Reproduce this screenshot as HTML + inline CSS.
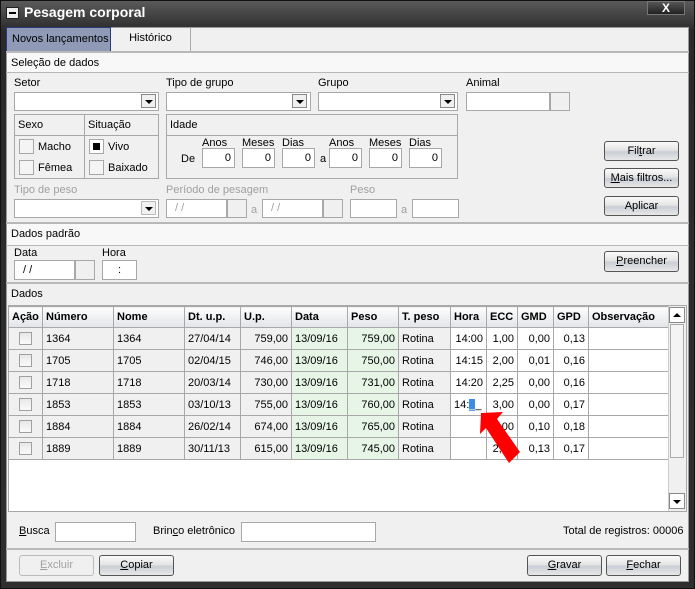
<!DOCTYPE html>
<html><head><meta charset="utf-8"><style>
*{box-sizing:border-box;margin:0;padding:0}
body{width:695px;height:589px;background:#3a3a3a;font-family:"Liberation Sans",Arial,sans-serif;font-size:11px;color:#000;position:relative;overflow:hidden}
.a{position:absolute}
.win{left:0;top:0;width:695px;height:589px;background:linear-gradient(#5a5a5a,#2a2a2a 30px,#2e2e2e);border:1px solid #111}
.title{left:24px;top:4px;color:#fff;font-weight:bold;font-size:14px}
.content{left:6px;top:27px;width:683px;height:555px;background:#f0f0f0;border:1px solid #999}
.in{background:#fff;border:1px solid #a8a8a8;position:absolute}
.btn{position:absolute;border:1px solid #555;border-radius:3px;background:linear-gradient(#fafafa,#e4e4e4 45%,#c9ced6 55%,#e8e8e8);text-align:center;line-height:18px;font-size:11px}
.hl{position:absolute;height:2px;background:#b8b8b8;left:6px;width:683px}
.cb{position:absolute;width:15px;height:15px;border:1px solid #a8a8a8;background:#f4f4f4}
.dd{position:absolute;width:15px;height:14px;border:1px solid #888;background:#f0f0f0}
.dd:after{content:"";position:absolute;left:3px;top:5px;border-left:4px solid transparent;border-right:4px solid transparent;border-top:4px solid #000}
.g{color:#a0a0a0}
table{border-collapse:collapse;position:absolute;left:8px;top:306px;font-size:11px;table-layout:fixed;width:660px}
td,th{border:1px solid #a8a8a8;height:22px;padding:0 3px;white-space:nowrap;overflow:hidden}
th{background:linear-gradient(#fdfdfd,#e2e4e8);text-align:left;font-weight:bold;height:21px}
td{background:#f0f0f0}
td.w{background:#fff}
td.gr{background:#e6f5e6}
.r{text-align:right}
.c{text-align:center}
.sq{display:inline-block;width:13px;height:13px;border:1px solid #a0a0a0;background:linear-gradient(#e8e8e8,#fafafa);vertical-align:middle}
</style></head><body>
<div class="a win"></div>
<div class="a" style="left:6px;top:7px;width:13px;height:12px;background:#eee;border:1px solid #222"><div class="a" style="left:2px;top:4px;width:7px;height:2px;background:#000"></div></div>
<div class="a title">Pesagem corporal</div>
<div class="a" style="left:647px;top:1px;width:38px;height:14px;border:1px solid #777;background:linear-gradient(#555,#222);color:#fff;text-align:center;font-weight:bold;font-size:12px;line-height:12px">X</div>
<div class="a content"></div>
<div class="a" style="left:6px;top:27px;width:105px;height:25px;background:#8e9ab6;border:1px solid #2a3a7a;line-height:23px;padding-left:5px">Novos lançamentos</div>
<div class="a" style="left:111px;top:27px;width:80px;height:25px;border-right:1px solid #aaa;line-height:23px;text-align:center">Histórico</div>
<div class="hl" style="top:51px"></div>
<div class="a" style="left:7px;top:53px;width:681px;height:20px;background:#f8f8f8;line-height:20px;padding-left:4px">Seleção de dados</div>
<div class="hl" style="top:72px;height:1px"></div>
<div class="a" style="left:14px;top:77px">Setor</div>
<div class="in" style="left:14px;top:92px;width:145px;height:19px"></div><div class="dd" style="left:141px;top:94px"></div>
<div class="a" style="left:166px;top:77px">Tipo de grupo</div>
<div class="in" style="left:166px;top:92px;width:145px;height:19px"></div><div class="dd" style="left:292px;top:94px"></div>
<div class="a" style="left:318px;top:77px">Grupo</div>
<div class="in" style="left:318px;top:92px;width:140px;height:19px"></div><div class="dd" style="left:440px;top:94px"></div>
<div class="a" style="left:466px;top:77px">Animal</div>
<div class="in" style="left:466px;top:92px;width:84px;height:19px"></div><div class="a" style="left:550px;top:92px;width:20px;height:19px;border:1px solid #a8a8a8"></div>
<div class="a" style="left:14px;top:114px;width:145px;height:65px;border:1px solid #a8a8a8"></div>
<div class="a" style="left:14px;top:135px;width:145px;height:1px;background:#a8a8a8"></div>
<div class="a" style="left:84px;top:114px;width:1px;height:65px;background:#a8a8a8"></div>
<div class="a" style="left:18px;top:119px">Sexo</div><div class="a" style="left:88px;top:119px">Situação</div>
<div class="cb" style="left:19px;top:139px"></div><div class="a" style="left:38px;top:141px">Macho</div>
<div class="cb" style="left:19px;top:160px"></div><div class="a" style="left:38px;top:162px">Fêmea</div>
<div class="cb" style="left:89px;top:139px;background:#fff"><div class="a" style="left:3px;top:3px;width:7px;height:7px;background:#000"></div></div><div class="a" style="left:108px;top:141px">Vivo</div>
<div class="cb" style="left:89px;top:160px"></div><div class="a" style="left:108px;top:162px">Baixado</div>
<div class="a" style="left:166px;top:114px;width:292px;height:65px;border:1px solid #a8a8a8"></div>
<div class="a" style="left:166px;top:135px;width:292px;height:1px;background:#a8a8a8"></div>
<div class="a" style="left:170px;top:119px">Idade</div>
<div class="a" style="left:202px;top:137px">Anos</div><div class="a" style="left:242px;top:137px">Meses</div><div class="a" style="left:282px;top:137px">Dias</div>
<div class="a" style="left:329px;top:137px">Anos</div><div class="a" style="left:369px;top:137px">Meses</div><div class="a" style="left:409px;top:137px">Dias</div>
<div class="a" style="left:181px;top:153px">De</div><div class="a" style="left:320px;top:153px">a</div>
<div class="in r" style="left:202px;top:148px;width:33px;height:20px;padding:3px 3px">0</div>
<div class="in r" style="left:242px;top:148px;width:33px;height:20px;padding:3px 3px">0</div>
<div class="in r" style="left:282px;top:148px;width:33px;height:20px;padding:3px 3px">0</div>
<div class="in r" style="left:329px;top:148px;width:33px;height:20px;padding:3px 3px">0</div>
<div class="in r" style="left:369px;top:148px;width:33px;height:20px;padding:3px 3px">0</div>
<div class="in r" style="left:409px;top:148px;width:33px;height:20px;padding:3px 3px">0</div>
<div class="a g" style="left:14px;top:184px">Tipo de peso</div>
<div class="in" style="left:14px;top:199px;width:145px;height:19px"></div><div class="dd" style="left:141px;top:201px;border-color:#bbb"></div>
<div class="a g" style="left:166px;top:184px">Período de pesagem</div>
<div class="in g" style="left:166px;top:199px;width:61px;height:19px;padding:2px 8px">/ /</div><div class="a" style="left:227px;top:199px;width:20px;height:19px;border:1px solid #a8a8a8"></div>
<div class="a g" style="left:251px;top:204px">a</div>
<div class="in g" style="left:262px;top:199px;width:61px;height:19px;padding:2px 8px">/ /</div><div class="a" style="left:323px;top:199px;width:20px;height:19px;border:1px solid #a8a8a8"></div>
<div class="a g" style="left:350px;top:184px">Peso</div>
<div class="in" style="left:350px;top:199px;width:47px;height:19px"></div>
<div class="a g" style="left:401px;top:204px">a</div>
<div class="in" style="left:412px;top:199px;width:47px;height:19px"></div>
<div class="btn" style="left:604px;top:141px;width:75px;height:20px">Fil<u>t</u>rar</div>
<div class="btn" style="left:604px;top:168px;width:75px;height:20px"><u>M</u>ais filtros...</div>
<div class="btn" style="left:604px;top:196px;width:75px;height:20px">Aplicar</div>
<div class="hl" style="top:222px"></div>
<div class="a" style="left:7px;top:224px;width:681px;height:21px;background:#f8f8f8;line-height:21px;padding-left:4px">Dados padrão</div>
<div class="hl" style="top:245px;height:1px"></div>
<div class="a" style="left:14px;top:247px">Data</div><div class="a" style="left:102px;top:247px">Hora</div>
<div class="in" style="left:14px;top:260px;width:61px;height:20px;padding:3px 8px">/ /</div><div class="a" style="left:75px;top:260px;width:20px;height:20px;border:1px solid #a8a8a8"></div>
<div class="in c" style="left:102px;top:260px;width:35px;height:20px;padding-top:3px">:</div>
<div class="btn" style="left:604px;top:251px;width:75px;height:21px"><u>P</u>reencher</div>
<div class="hl" style="top:282px"></div>
<div class="a" style="left:11px;top:288px">Dados</div>
<div class="a" style="left:8px;top:305px;width:679px;height:207px;background:#fff;border:1px solid #a8a8a8"></div>
<table>
<colgroup><col style="width:34px"><col style="width:71px"><col style="width:71px"><col style="width:56px"><col style="width:51px"><col style="width:56px"><col style="width:51px"><col style="width:52px"><col style="width:36px"><col style="width:31px"><col style="width:36px"><col style="width:35px"><col style="width:80px"></colgroup>
<tr><th>Ação</th><th>Número</th><th>Nome</th><th>Dt. u.p.</th><th>U.p.</th><th>Data</th><th>Peso</th><th>T. peso</th><th>Hora</th><th>ECC</th><th>GMD</th><th>GPD</th><th>Observação</th></tr>
<tr><td class="c"><span class="sq"></span></td><td>1364</td><td>1364</td><td>27/04/14</td><td class="r">759,00</td><td class="gr">13/09/16</td><td class="gr r">759,00</td><td>Rotina</td><td class="w r">14:00</td><td class="w r">1,00</td><td class="w r">0,00</td><td class="w r">0,13</td><td class="w"></td></tr>
<tr><td class="c"><span class="sq"></span></td><td>1705</td><td>1705</td><td>02/04/15</td><td class="r">746,00</td><td class="gr">13/09/16</td><td class="gr r">750,00</td><td>Rotina</td><td class="w r">14:15</td><td class="w r">2,00</td><td class="w r">0,01</td><td class="w r">0,16</td><td class="w"></td></tr>
<tr><td class="c"><span class="sq"></span></td><td>1718</td><td>1718</td><td>20/03/14</td><td class="r">730,00</td><td class="gr">13/09/16</td><td class="gr r">731,00</td><td>Rotina</td><td class="w r">14:20</td><td class="w r">2,25</td><td class="w r">0,00</td><td class="w r">0,16</td><td class="w"></td></tr>
<tr><td class="c"><span class="sq"></span></td><td>1853</td><td>1853</td><td>03/10/13</td><td class="r">755,00</td><td class="gr">13/09/16</td><td class="gr r">760,00</td><td>Rotina</td><td class="w">14:<span style="background:#3a8ee6;color:#fff">_</span>_</td><td class="w r">3,00</td><td class="w r">0,00</td><td class="w r">0,17</td><td class="w"></td></tr>
<tr><td class="c"><span class="sq"></span></td><td>1884</td><td>1884</td><td>26/02/14</td><td class="r">674,00</td><td class="gr">13/09/16</td><td class="gr r">765,00</td><td>Rotina</td><td class="w"></td><td class="w r">2,00</td><td class="w r">0,10</td><td class="w r">0,18</td><td class="w"></td></tr>
<tr><td class="c"><span class="sq"></span></td><td>1889</td><td>1889</td><td>30/11/13</td><td class="r">615,00</td><td class="gr">13/09/16</td><td class="gr r">745,00</td><td>Rotina</td><td class="w"></td><td class="w r">2,00</td><td class="w r">0,13</td><td class="w r">0,17</td><td class="w"></td></tr>
</table>
<div class="a" style="left:668px;top:306px;width:18px;height:205px;background:#f0f0f0;border-left:1px solid #ccc"></div>
<div class="a" style="left:669px;top:307px;width:16px;height:16px;border:1px solid #888;background:#fff"><div class="a" style="left:3px;top:5px;border-left:4px solid transparent;border-right:4px solid transparent;border-bottom:4px solid #000"></div></div>
<div class="a" style="left:670px;top:324px;width:14px;height:134px;border:1px solid #aaa;background:#f4f4f4"></div>
<div class="a" style="left:669px;top:493px;width:16px;height:16px;border:1px solid #888;background:#fff"><div class="a" style="left:3px;top:6px;border-left:4px solid transparent;border-right:4px solid transparent;border-top:4px solid #000"></div></div>
<svg class="a" style="left:0;top:0" width="695" height="589"><polygon points="481,413 503,412 497,419 520,452 509,463 486,428 480,434" fill="#f00"/></svg>
<div class="a" style="left:19px;top:525px"><u>B</u>usca</div>
<div class="in" style="left:55px;top:522px;width:81px;height:20px"></div>
<div class="a" style="left:153px;top:525px">Brin<u>c</u>o eletrônico</div>
<div class="in" style="left:241px;top:522px;width:135px;height:20px"></div>
<div class="a" style="left:563px;top:525px">Total de registros: 00006</div>
<div class="hl" style="top:548px"></div>
<div class="btn g" style="left:19px;top:555px;width:75px;height:21px;border-color:#bbb;background:#f0f0f0"><u>E</u>xcluir</div>
<div class="btn" style="left:99px;top:555px;width:75px;height:21px"><u>C</u>opiar</div>
<div class="btn" style="left:527px;top:555px;width:75px;height:21px"><u>G</u>ravar</div>
<div class="btn" style="left:606px;top:555px;width:75px;height:21px"><u>F</u>echar</div>
</body></html>
